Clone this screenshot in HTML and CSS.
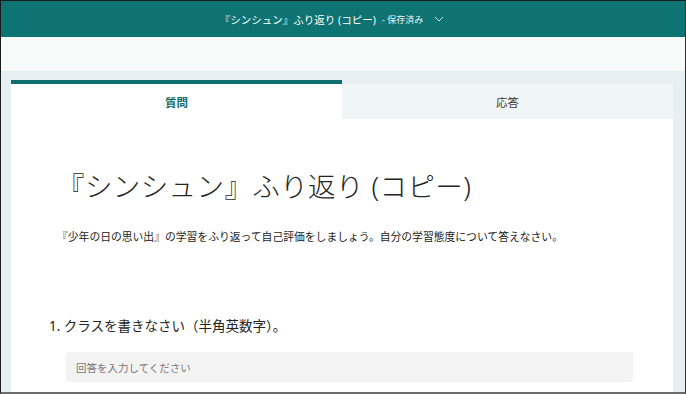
FILE: index.html
```html
<!DOCTYPE html>
<html lang="ja">
<head>
<meta charset="utf-8">
<link rel="stylesheet" href="styles.css">
</head>
<body>
<div class="frame">
  <header class="topbar">
    <span class="doc-title">『シンシュン』ふり返り (コピー)</span>
    <span class="save-state">- 保存済み</span>
    <svg class="chev" width="10" height="6" viewBox="0 0 10 6"><path d="M1 1l4 4 4-4" fill="none" stroke="#cfe3e3" stroke-width="1"/></svg>
  </header>
  <div class="band"></div>
  <main class="stage">
    <section class="card">
      <nav class="tabs">
        <div class="tab tab-active">質問</div>
        <div class="tab tab-idle">応答</div>
      </nav>
      <div class="body">
        <h1 class="form-title">『シンシュン』ふり返り (コピー)</h1>
        <p class="desc">『少年の日の思い出』の学習をふり返って自己評価をしましょう。自分の学習態度について答えなさい。</p>
        <div class="question">
          <div class="q-label">1. クラスを書きなさい（半角英数字）。</div>
          <div class="answer">回答を入力してください</div>
        </div>
      </div>
    </section>
  </main>
</div>
</body>
</html>
```

FILE: styles.css
```css
* { box-sizing: border-box; }
html, body { margin: 0; padding: 0; }
body {
  width: 686px;
  height: 394px;
  overflow: hidden;
  font-family: "Noto Sans", "Noto Sans CJK JP", sans-serif;
  color: #252423;
}
.frame {
  width: 686px;
  height: 394px;
  border-top: 1px solid #1a1a1a;
  border-left: 1px solid #1a1a1a;
  border-right: 1px solid #333;
  border-bottom: 2px solid #6b6b6b;
  display: flex;
  flex-direction: column;
  overflow: hidden;
}
.topbar {
  height: 36px;
  flex: none;
  background: #0e7373;
  color: #fff;
  display: flex;
  align-items: center;
  justify-content: center;
  gap: 6px;
  padding-right: 22px;
}
.doc-title { font-size: 10.5px; }
.save-state { font-size: 9px; color: #e8f2f2; }
.chev { margin-left: 5px; }
.band {
  height: 34px;
  flex: none;
  background: #f8f9f9;
}
.stage {
  flex: 1;
  background: #e6eff1;
  padding: 9px 12px 0 10px;
  overflow: hidden;
}
.card {
  background: #fff;
  height: 100%;
}
.tabs {
  display: flex;
  height: 39px;
}
.tab {
  flex: 1;
  display: flex;
  align-items: center;
  justify-content: center;
  font-size: 11.5px;
}
.tab-active {
  border-top: 4px solid #0f6e6f;
  background: #fff;
  color: #0f6e6f;
  font-weight: 700;
}
.tab-idle {
  border-top: 4px solid #e6eff1;
  background: #f0f5f6;
  color: #3b3a39;
}
.body {
  padding: 0 0 0 38px;
}
.form-title {
  margin: 50px 0 0 8px;
  font-size: 27.5px;
  font-weight: 300;
  line-height: 36px;
  letter-spacing: 0.4px;
  color: #252423;
}
.desc {
  margin: 24px 0 0 8px;
  font-size: 10.8px;
  line-height: 16px;
  color: #252423;
}
.question {
  margin-top: 72px;
}
.q-label {
  font-size: 13.5px;
  line-height: 18px;
}
.answer {
  margin: 17px 0 0 17px;
  width: 567px;
  height: 30px;
  border-radius: 3px;
  background: #f3f3f3;
  color: #777;
  font-size: 10.5px;
  display: flex;
  align-items: center;
  padding-left: 10px;
}
```
